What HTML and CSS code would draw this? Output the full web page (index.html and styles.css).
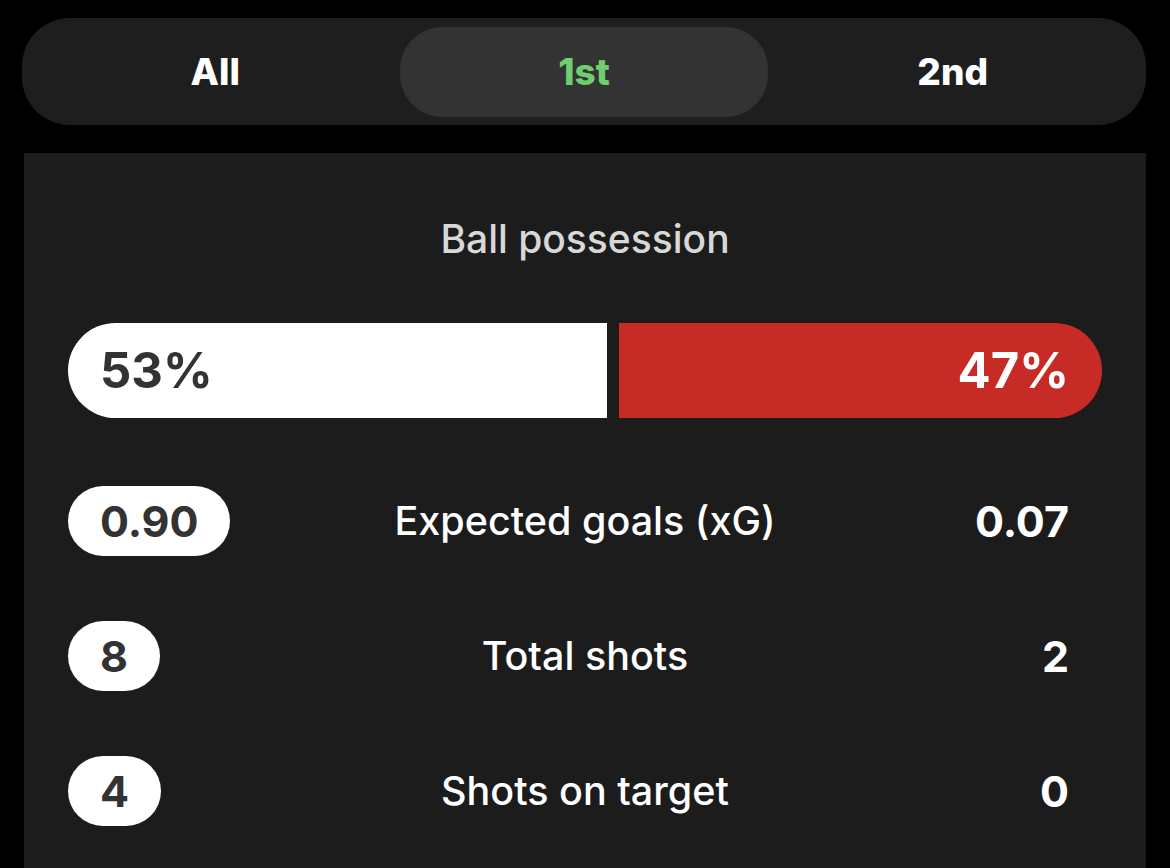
FILE: index.html
```html
<!DOCTYPE html>
<html>
<head>
<meta charset="utf-8">
<link rel="stylesheet" href="styles.css">
</head>
<body>
<div class="page">
  <nav class="tabs">
    <div class="tab">All</div>
    <div class="tab active">1st</div>
    <div class="tab">2nd</div>
  </nav>
  <section class="card">
    <div class="title">Ball possession</div>
    <div class="poss">
      <div class="poss-home" style="flex: 53 1 0;">53%</div>
      <div class="poss-away" style="flex: 47 1 0;">47%</div>
    </div>
    <div class="stats">
      <div class="row">
        <div class="home"><span class="pill">0.90</span></div>
        <div class="label">Expected goals (xG)</div>
        <div class="away">0.07</div>
      </div>
      <div class="row">
        <div class="home"><span class="pill">8</span></div>
        <div class="label">Total shots</div>
        <div class="away">2</div>
      </div>
      <div class="row">
        <div class="home"><span class="pill">4</span></div>
        <div class="label">Shots on target</div>
        <div class="away">0</div>
      </div>
    </div>
  </section>
</div>
</body>
</html>
```

FILE: styles.css
```css
html, body {
  margin: 0;
  padding: 0;
  background: #000;
  height: 100%;
  overflow: hidden;
}
body {
  font-family: Inter, "Noto Sans", sans-serif;
  color: #fff;
}
.page {
  padding: 18px 24px 0 22px;
  display: flex;
  flex-direction: column;
}
.tabs {
  height: 107px;
  background: #1e1e1e;
  border-radius: 48px;
  display: grid;
  grid-template-columns: 1fr 1fr 1fr;
  align-items: center;
  padding: 0 9px;
  box-sizing: border-box;
}
.tab {
  height: 90px;
  display: flex;
  align-items: center;
  justify-content: center;
  font-size: 37px;
  font-weight: 800;
  color: #fff;
  border-radius: 42px;
}
.tab.active {
  background: #333333;
  color: #6fcf6f;
}
.card {
  margin-top: 28px;
  margin-left: 2px;
  background: #1c1c1c;
  height: 715px;
  padding: 0 44px;
  box-sizing: border-box;
}
.title {
  text-align: center;
  color: #d8d8d8;
  font-size: 39px;
  font-weight: 500;
  padding-top: 64px;
  height: 108px;
  box-sizing: border-box;
  line-height: 44px;
}
.poss {
  margin-top: 62px;
  height: 95px;
  display: flex;
  gap: 12px;
}
.poss-home, .poss-away {
  display: flex;
  align-items: center;
  font-size: 49px;
  font-weight: 700;
}
.poss-home {
  background: #fff;
  color: #333;
  border-radius: 48px 0 0 48px;
  padding-left: 32px;
}
.poss-away {
  background: #c72b25;
  color: #fff;
  border-radius: 0 48px 48px 0;
  justify-content: flex-end;
  padding-right: 33px;
}
.stats {
  margin-top: 68px;
  display: flex;
  flex-direction: column;
  gap: 65px;
}
.row {
  height: 70px;
  display: grid;
  grid-template-columns: 1fr auto 1fr;
  align-items: center;
}
.pill {
  display: inline-flex;
  align-items: center;
  justify-content: center;
  background: #fff;
  color: #333;
  height: 70px;
  min-width: 92px;
  padding: 0 32px;
  box-sizing: border-box;
  border-radius: 35px;
  font-size: 43px;
  font-weight: 700;
}
.label {
  text-align: center;
  font-size: 39.5px;
  font-weight: 500;
  color: #fff;
}
.away {
  text-align: right;
  font-size: 43px;
  font-weight: 700;
  padding-right: 33px;
}
```
